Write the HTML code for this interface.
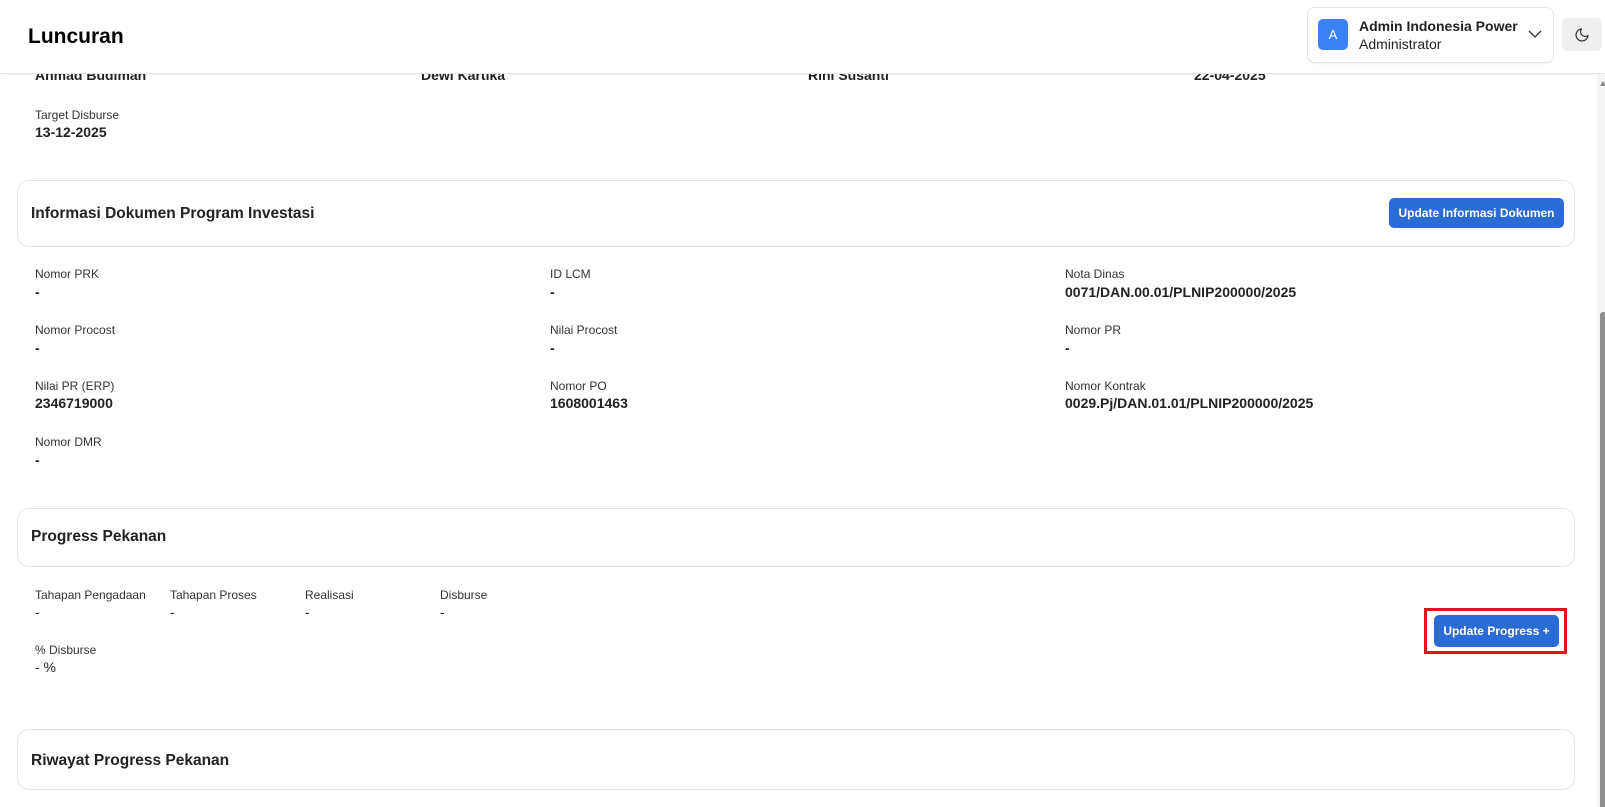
<!DOCTYPE html>
<html><head><meta charset="utf-8"><style>
*{margin:0;padding:0;box-sizing:border-box}
body{width:1605px;height:807px;overflow:hidden;background:#fff;font-family:"Liberation Sans",sans-serif;color:#1f2328;position:relative}
.a{position:absolute;white-space:nowrap}
.lbl{font-size:12px;color:#333;line-height:14px}
.val{font-size:14px;font-weight:bold;color:#222;line-height:16px}
.card{position:absolute;left:17px;width:1558px;border:1px solid #e3e5e8;border-radius:12px;background:#fff}
.ct{position:absolute;left:13px;font-size:15.5px;font-weight:bold;color:#222;line-height:18px}
.btn{position:absolute;background:#2b6bd6;color:#fff;font-size:12px;font-weight:bold;border-radius:5px;text-align:center}
</style></head><body>
<div class="a val" style="left:35px;top:67px">Ahmad Budiman</div>
<div class="a val" style="left:421px;top:67px">Dewi Kartika</div>
<div class="a val" style="left:808px;top:67px">Rini Susanti</div>
<div class="a val" style="left:1194px;top:67px">22-04-2025</div>

<div class="a" style="left:0;top:0;width:1605px;height:74px;background:#fff;border-bottom:1px solid #e6e6e6;box-shadow:0 1px 3px rgba(0,0,0,0.06)"></div>
<div class="a" style="left:28px;top:25px;font-size:21px;font-weight:bold;color:#000">Luncuran</div>
<div class="a" style="left:1307px;top:7px;width:247px;height:56px;border:1px solid #e3e5e8;border-radius:8px;background:#fff;box-shadow:0 1px 2px rgba(0,0,0,0.05)"></div>
<div class="a" style="left:1318px;top:19px;width:30px;height:31px;border-radius:5px;background:#3b82f6;color:#fff;font-size:13px;text-align:center;line-height:31px">A</div>
<div class="a" style="left:1359px;top:18px;font-size:14px;font-weight:bold;color:#222">Admin Indonesia Power</div>
<div class="a" style="left:1359px;top:36px;font-size:14px;color:#222">Administrator</div>
<svg class="a" style="left:1528px;top:29px" width="14" height="10" viewBox="0 0 14 10"><path d="M1 2l6 6 6-6" fill="none" stroke="#333" stroke-width="1.3"/></svg>
<div class="a" style="left:1562px;top:18px;width:40px;height:33px;border-radius:6px;background:#efefef"></div>
<svg class="a" style="left:1574px;top:27px" width="16" height="16" viewBox="0 0 24 24"><path d="M21 12.8A9 9 0 1 1 11.2 3a7 7 0 0 0 9.8 9.8z" fill="none" stroke="#333" stroke-width="1.8" stroke-linejoin="round"/></svg>

<div class="a lbl" style="left:35px;top:108px">Target Disburse</div>
<div class="a val" style="left:35px;top:124px">13-12-2025</div>

<div class="card" style="top:180px;height:67px"><div class="ct" style="top:24px">Informasi Dokumen Program Investasi</div></div>
<div class="btn" style="left:1389px;top:198px;width:175px;height:30px;line-height:30px">Update Informasi Dokumen</div>

<div class="a lbl" style="left:35px;top:267px">Nomor PRK</div><div class="a val" style="left:35px;top:284px">-</div>
<div class="a lbl" style="left:550px;top:267px">ID LCM</div><div class="a val" style="left:550px;top:284px">-</div>
<div class="a lbl" style="left:1065px;top:267px">Nota Dinas</div><div class="a val" style="left:1065px;top:284px">0071/DAN.00.01/PLNIP200000/2025</div>
<div class="a lbl" style="left:35px;top:323px">Nomor Procost</div><div class="a val" style="left:35px;top:340px">-</div>
<div class="a lbl" style="left:550px;top:323px">Nilai Procost</div><div class="a val" style="left:550px;top:340px">-</div>
<div class="a lbl" style="left:1065px;top:323px">Nomor PR</div><div class="a val" style="left:1065px;top:340px">-</div>
<div class="a lbl" style="left:35px;top:379px">Nilai PR (ERP)</div><div class="a val" style="left:35px;top:395px">2346719000</div>
<div class="a lbl" style="left:550px;top:379px">Nomor PO</div><div class="a val" style="left:550px;top:395px">1608001463</div>
<div class="a lbl" style="left:1065px;top:379px">Nomor Kontrak</div><div class="a val" style="left:1065px;top:395px">0029.Pj/DAN.01.01/PLNIP200000/2025</div>
<div class="a lbl" style="left:35px;top:435px">Nomor DMR</div><div class="a val" style="left:35px;top:452px">-</div>

<div class="card" style="top:508px;height:59px"><div class="ct" style="top:19px">Progress Pekanan</div></div>
<div class="a lbl" style="left:35px;top:588px">Tahapan Pengadaan</div><div class="a val" style="left:35px;top:604px;font-weight:normal">-</div>
<div class="a lbl" style="left:170px;top:588px">Tahapan Proses</div><div class="a val" style="left:170px;top:604px;font-weight:normal">-</div>
<div class="a lbl" style="left:305px;top:588px">Realisasi</div><div class="a val" style="left:305px;top:604px;font-weight:normal">-</div>
<div class="a lbl" style="left:440px;top:588px">Disburse</div><div class="a val" style="left:440px;top:604px;font-weight:normal">-</div>
<div class="a lbl" style="left:35px;top:643px">% Disburse</div><div class="a val" style="left:35px;top:659px;font-weight:normal">- %</div>

<div class="a" style="left:1424px;top:608px;width:143px;height:46px;border:3px solid #e3141e"></div>
<div class="btn" style="left:1434px;top:615px;width:125px;height:32px;line-height:32px">Update Progress +</div>

<div class="card" style="top:729px;height:61px"><div class="ct" style="top:22px">Riwayat Progress Pekanan</div></div>

<div class="a" style="left:1597px;top:75px;width:8px;height:732px;background:#f5f5f5"></div>
<div class="a" style="left:1600px;top:81px;width:0;height:0;border-left:3px solid transparent;border-right:3px solid transparent;border-bottom:5px solid #888"></div>
<div class="a" style="left:1600px;top:312px;width:5px;height:495px;background:#8f8f8f;border-radius:3px 0 0 0"></div>
</body></html>
